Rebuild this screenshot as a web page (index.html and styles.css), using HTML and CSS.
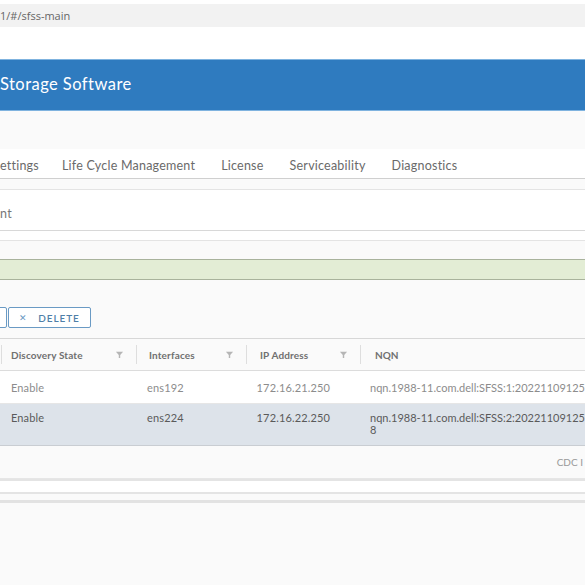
FILE: index.html
```html
<!DOCTYPE html>
<html>
<head>
<meta charset="utf-8">
<link rel="stylesheet" href="styles.css">
</head>
<body>
<div class="topstrip"></div>
<div class="address">1/#/sfss-main</div>
<div class="gap-white"></div>
<header class="banner">Storage Software</header>
<div class="subgap"></div>
<nav class="tabs">
  <span class="tab first">ettings</span>
  <span class="tab">Life Cycle Management</span>
  <span class="tab">License</span>
  <span class="tab">Serviceability</span>
  <span class="tab">Diagnostics</span>
</nav>
<div class="subnav">
  <div class="subtitle">nt</div>
</div>
<div class="spacer1"></div>
<div class="alert"></div>
<div class="toolbar">
  <button class="btn prev"></button>
  <button class="btn del"><span class="x">✕</span>DELETE</button>
</div>
<div class="grid">
  <div class="row head">
    <div class="cell c0"></div>
    <div class="cell c1">Discovery State<svg class="filt" viewBox="0 0 10 10"><path d="M1 2h8L5.8 5.6V9H4.2V5.6z" fill="#b5b5b5"/></svg></div>
    <div class="cell c2">Interfaces<svg class="filt" viewBox="0 0 10 10"><path d="M1 2h8L5.8 5.6V9H4.2V5.6z" fill="#b5b5b5"/></svg></div>
    <div class="cell c3">IP Address<svg class="filt" viewBox="0 0 10 10"><path d="M1 2h8L5.8 5.6V9H4.2V5.6z" fill="#b5b5b5"/></svg></div>
    <div class="cell c4">NQN</div>
  </div>
  <div class="row r1">
    <div class="cell c0"></div>
    <div class="cell c1">Enable</div>
    <div class="cell c2">ens192</div>
    <div class="cell c3">172.16.21.250</div>
    <div class="cell c4">nqn.1988-11.com.dell:SFSS:1:20221109125</div>
  </div>
  <div class="row r2">
    <div class="cell c0"></div>
    <div class="cell c1">Enable</div>
    <div class="cell c2">ens224</div>
    <div class="cell c3">172.16.22.250</div>
    <div class="cell c4">nqn.1988-11.com.dell:SFSS:2:20221109125<br>8</div>
  </div>
  <div class="footer"><span class="cdc">CDC I</span></div>
</div>
<div class="lines">
  <div class="l1"></div>
  <div class="l2"></div>
  <div class="l3"></div>
</div>
</body>
</html>
```
FILE: styles.css
```css
html, body {
  margin: 0;
  padding: 0;
  width: 585px;
  height: 585px;
  overflow: hidden;
  background: #fafafa;
  font-family: "Lato", "Open Sans", sans-serif;
}
.topstrip {
  height: 4px;
  background: #ffffff;
}
.address {
  height: 23px;
  line-height: 23px;
  background: #f2f2f2;
  color: #666;
  font-size: 11px;
  font-family: "Open Sans", sans-serif;
}
.gap-white {
  height: 32px;
  background: #ffffff;
}
.banner {
  height: 50px;
  background: #2f7bbf;
  border-top: 1px solid #7fb3df;
  border-bottom: 1px solid #7fb3df;
  color: #ffffff;
  font-size: 16.5px;
  line-height: 48px;
  letter-spacing: 0.45px;
}
.subgap {
  height: 38px;
  background: #fafafa;
}
.tabs {
  height: 30px;
  display: flex;
  align-items: center;
  background: #ffffff;
  border-bottom: 1px solid #cfcfcf;
  font-size: 12.5px;
  letter-spacing: 0.22px;
  color: #6a6a6a;
  padding-top: 3px;
  box-sizing: border-box;
}
.tab {
  margin-right: 26px;
}
.tab.first {
  margin-right: 23px;
}
.subnav {
  margin-top: 10px;
  height: 40px;
  background: #ffffff;
  border-top: 1px solid #e4e4e4;
  border-bottom: 1px solid #d8d8d8;
  display: flex;
  align-items: center;
}
.subtitle {
  font-size: 12.5px;
  letter-spacing: 0.3px;
  color: #777;
  margin-top: 6px;
}
.spacer1 {
  height: 9px;
  background: #ffffff;
  border-bottom: 1px solid #e4e4e4;
  margin-bottom: 18px;
}
.alert {
  height: 19px;
  background: #e3edd5;
  border-top: 1px solid #a9b39c;
  border-bottom: 1px solid #a9b39c;
}
.toolbar {
  display: flex;
  margin-top: 27px;
  height: 21px;
}
.btn {
  height: 21px;
  background: #ffffff;
  border: 1px solid #6a9ac4;
  border-radius: 2px;
  padding: 0;
  margin: 0;
  font-family: "Lato", sans-serif;
}
.prev {
  width: 20px;
  margin-left: -13px;
}
.del {
  width: 83px;
  margin-left: 1px;
  color: #4f7fa8;
  font-size: 10px;
  letter-spacing: 0.9px;
  display: flex;
  align-items: center;
  justify-content: center;
  font-weight: 600;
}
.x {
  font-size: 9px;
  margin-right: 10px;
  font-weight: 400;
  color: #6a98c2;
}
.grid {
  margin-top: 10px;
  border-top: 1px solid #d7d7d7;
  background: #ffffff;
}
.row {
  display: flex;
  font-size: 11px;
  letter-spacing: 0.15px;
}
.row.head {
  height: 31px;
  align-items: center;
  color: #707070;
  font-weight: 700;
  font-size: 10px;
  border-bottom: 1px solid #dcdcdc;
  background: #fafafa;
}
.head .cell {
  display: flex;
  align-items: center;
  height: 19px;
  border-right: 1px solid #dedede;
}
.head .c4 { border-right: none; }
.cell {
  box-sizing: border-box;
  padding-left: 11px;
  position: relative;
}
.c0 { width: 2px; padding-left: 0; }
.c1 { width: 135px; padding-left: 9px; }
.c2 { width: 110px; padding-left: 12px; }
.c3 { width: 114px; padding-left: 13px; }
.c4 { flex: 1; padding-left: 14px; white-space: nowrap; letter-spacing: 0; }
.filt {
  width: 9px;
  height: 9px;
  margin-left: auto;
  margin-right: 12px;
}
.r1 {
  height: 32px;
  align-items: center;
  color: #8c8c8c;
  border-bottom: 1px solid #e6e6e6;
  background: #ffffff;
}
.r2 {
  height: 42px;
  background: #dde3ea;
  color: #5a5a5a;
  border-bottom: 1px solid #c9cdd2;
  align-items: flex-start;
  padding-top: 8px;
  box-sizing: border-box;
  line-height: 12px;
}
.footer {
  height: 32px;
  background: #fafafa;
  display: flex;
  align-items: center;
  justify-content: flex-end;
  font-size: 10px;
  color: #999;
  border-bottom: 1px solid #e6e6e6;
}
.cdc {
  margin-right: 2px;
}
.lines .l1 {
  height: 11px;
  background: #ffffff;
  border-top: 2px solid #e4e4e4;
  border-bottom: 2px solid #e4e4e4;
}
.lines .l2 {
  height: 6px;
  background: #fafafa;
  border-bottom: 3px solid #e2e2e2;
}
.lines .l3 {
  height: 80px;
  background: #fafafa;
}
```
